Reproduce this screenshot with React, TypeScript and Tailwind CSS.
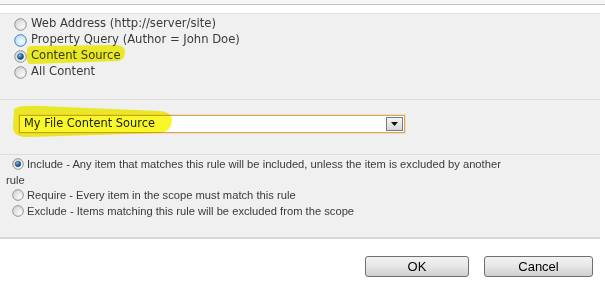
import React from "react";

type RadioProps = { state?: "off" | "hover" | "on"; size?: number };

const Radio = ({ state = "off", size = 13 }: RadioProps) => {
  const ring = state === "hover" ? "#3c7fb1" : "#8e8f8f";
  return (
    <svg width={size} height={size} viewBox="0 0 13 13" className="inline-block shrink-0 align-[-2px]">
      <defs>
        <radialGradient id="rg-off" cx="0.7" cy="0.7" r="0.8">
          <stop offset="0" stopColor="#fbfbfb" />
          <stop offset="1" stopColor="#d2d2d2" />
        </radialGradient>
        <radialGradient id="rg-hover" cx="0.6" cy="0.6" r="0.8">
          <stop offset="0" stopColor="#f2fbff" />
          <stop offset="1" stopColor="#a8d8f4" />
        </radialGradient>
        <radialGradient id="rg-dot" cx="0.35" cy="0.3" r="0.8">
          <stop offset="0" stopColor="#7fc3f2" />
          <stop offset="0.6" stopColor="#1d5f9a" />
          <stop offset="1" stopColor="#0f3d66" />
        </radialGradient>
      </defs>
      <circle cx="6.5" cy="6.5" r="5.8" fill={state === "hover" ? "url(#rg-hover)" : "url(#rg-off)"} stroke={ring} strokeWidth="1" />
      {state === "on" && <circle cx="6.5" cy="6.5" r="3" fill="url(#rg-dot)" stroke="#16456f" strokeWidth="0.6" />}
    </svg>
  );
};

const Button = ({ label, w }: { label: string; w: string }) => (
  <button
    className={`${w} h-[21px] rounded-[3px] border border-[#707070] bg-gradient-to-b from-[#f2f2f2] via-[#e6e6e6] to-[#cfcfcf] text-[13px] leading-none text-black font-['Liberation_Sans',Arial,sans-serif]`}
  >
    {label}
  </button>
);

export default function App() {
  return (
    <div className="relative w-[605px] h-[293px] overflow-hidden bg-white font-['DejaVu_Sans',Verdana,sans-serif] text-[#3a3a3a]">
      <div className="h-[5px] bg-[#f7f7f7] border-b border-[#c3c3c3]" />
      <div className="h-[8px]" />
      <div className="relative w-[600px] bg-[#f0f0f0] border-t border-[#e3e3e3] border-b-2 border-b-[#d8d8d8]">
        <div className="pt-[2px] pb-[19px] pl-[14px] border-b border-[#dcdcdc] text-[11.6px]">
          <div className="h-[16px] flex items-center gap-[4px]"><Radio /><span>Web Address (http://server/site)</span></div>
          <div className="h-[16px] flex items-center gap-[4px]"><Radio state="hover" /><span>Property Query (Author = John Doe)</span></div>
          <div className="h-[16px] flex items-center gap-[4px]"><Radio state="on" /><span>Content Source</span></div>
          <div className="h-[16px] flex items-center gap-[4px]"><Radio /><span>All Content</span></div>
        </div>
        <div className="pt-[15px] pb-[21px] pl-[19px] border-b border-[#dcdcdc]">
          <div className="w-[386px] h-[18px] flex items-center justify-between bg-white border border-[#d4a462] shadow-[0_0_0_1px_#f3dcb8] pl-[4px] pr-[1px]">
            <span className="text-[11.4px] text-[#222]">My File Content Source</span>
            <div className="w-[17px] h-[14px] flex items-center justify-center border border-[#7a7a7a] bg-gradient-to-b from-[#f4f4f4] to-[#d8d8d8]">
              <svg width="7" height="4" viewBox="0 0 7 4"><path d="M0 0h7L3.5 4z" fill="#111" /></svg>
            </div>
          </div>
        </div>
        <div className="pt-[2px] pb-[18px] pl-[6px] leading-[15.5px] text-[11.2px] font-['Liberation_Sans',Arial,sans-serif]">
          <div><span className="ml-[6px]"><Radio state="on" size={12} /></span><span className="ml-[3px]">Include - Any item that matches this rule will be included, unless the item is excluded by another</span><br />rule</div>
          <div className="pl-[6px]"><Radio size={12} /><span className="ml-[3px]">Require - Every item in the scope must match this rule</span></div>
          <div className="pl-[6px]"><Radio size={12} /><span className="ml-[3px]">Exclude - Items matching this rule will be excluded from the scope</span></div>
        </div>
        <svg className="absolute left-0 top-0 mix-blend-multiply pointer-events-none" width="600" height="230" viewBox="0 14 600 230">
          <path d="M27,49 Q27,46 32,46 L117,45 Q126,46 125,53 Q124,61 117,61 L31,64 Q27,64 27,59 Z" fill="#f7f72a" />
          <path d="M14,110 Q16,105 40,106 L160,111 Q172,112 172,121 Q171,132 160,133 L30,137 Q14,138 13,128 Z" fill="#f7f72a" />
        </svg>
      </div>
      <div className="flex justify-end gap-[15px] pr-[12px] pt-[17px]">
        <Button label="OK" w="w-[104px]" />
        <Button label="Cancel" w="w-[109px]" />
      </div>
    </div>
  );
}
